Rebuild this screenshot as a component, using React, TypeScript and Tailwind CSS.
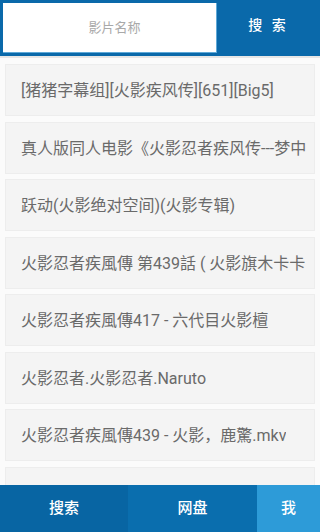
import React from "react";

const items = [
  "[猪猪字幕组][火影疾风传][651][Big5]",
  "真人版同人电影《火影忍者疾风传---梦中",
  "跃动(火影绝对空间)(火影专辑)",
  "火影忍者疾風傳 第439話 ( 火影旗木卡卡",
  "火影忍者疾風傳417 - 六代目火影檀",
  "火影忍者.火影忍者.Naruto",
  "火影忍者疾風傳439 - 火影，鹿驚.mkv",
  "火影忍者疾風傳438 - 火影忍者疾風",
];

const font = { fontFamily: '"Roboto", "Noto Sans CJK SC", sans-serif' };

export default function App() {
  return (
    <div className="relative h-[532px] w-[320px] overflow-hidden bg-[#fbfbfb]" style={font}>
      {/* Search header */}
      <div className="flex h-[56px] bg-[#0a69aa] p-[3px] pr-0">
        <div className="flex w-[214px] items-center justify-center bg-white border-r border-b border-[#5fa9d8] pl-[10px] text-[13px] text-[#a9a9a9]">
          影片名称
        </div>
        <div className="flex flex-1 items-center justify-center pb-[6px] text-[14px] font-medium tracking-[3px] text-white">
          搜 索
        </div>
      </div>
      <div className="h-[2px] bg-[#e6e6e6]" />

      {/* Results */}
      <div className="flex flex-col gap-[5.5px] px-[5px] pt-[6px]">
        {items.map((t) => (
          <div
            key={t}
            className="flex h-[52px] items-center border border-[#ededed] bg-[#f4f4f4] pl-[15px] pr-[8px] pt-[2px] text-[16px] text-[#6a6a6a]"
          >
            <span className="overflow-hidden whitespace-nowrap">{t}</span>
          </div>
        ))}
      </div>

      {/* Bottom tabs */}
      <div className="absolute bottom-0 left-0 right-0 flex h-[47px] text-[15px] font-medium text-white">
        <div className="flex w-[128px] items-center justify-center bg-[#0865a3]">搜索</div>
        <div className="flex w-[129px] items-center justify-center bg-[#0a6eae]">网盘</div>
        <div className="flex flex-1 items-center justify-center bg-[#2d9bd8]">我</div>
      </div>
    </div>
  );
}
